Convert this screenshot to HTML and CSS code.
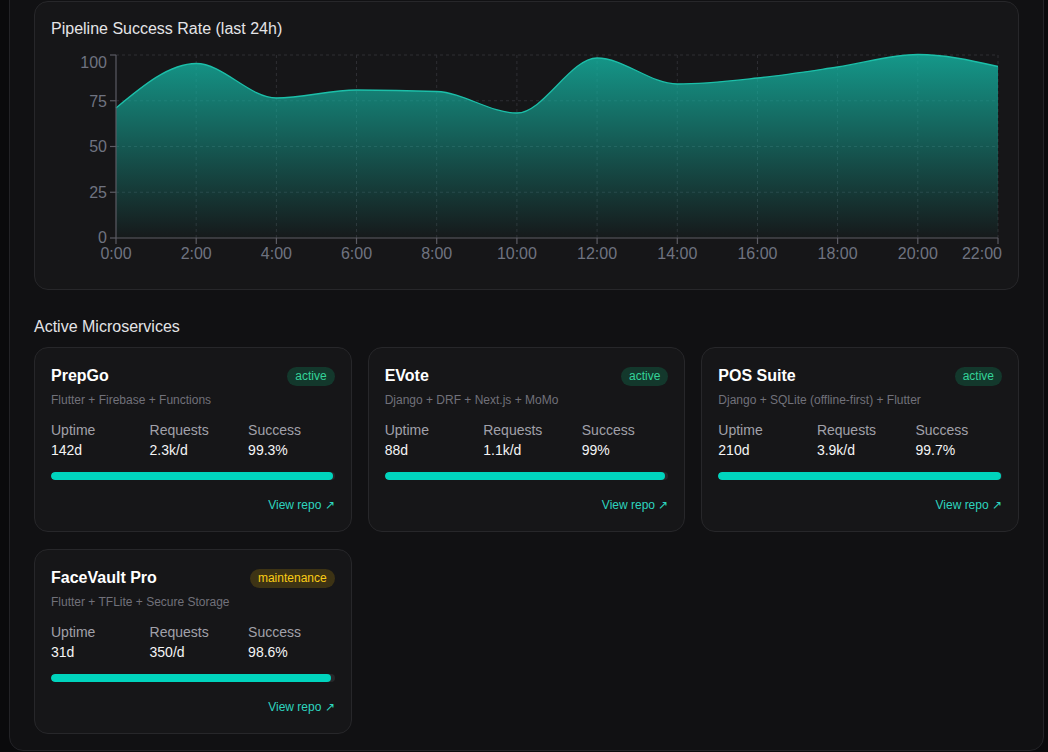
FILE: index.html
```html
<!DOCTYPE html>
<html lang="en">
<head>
<meta charset="utf-8">
<title>Pipeline Dashboard</title>
<link rel="stylesheet" href="styles.css">
</head>
<body>
<main class="panel">
  <section class="card chart-card">
    <h2 class="card-title">Pipeline Success Rate (last 24h)</h2>
    <svg class="chart" width="950" height="228" viewBox="0 0 950 228">
      <defs>
        <linearGradient id="areaFill" x1="0" y1="0" x2="0" y2="1">
          <stop offset="0%" stop-color="#14b8a6" stop-opacity="0.8"/>
          <stop offset="100%" stop-color="#14b8a6" stop-opacity="0.02"/>
        </linearGradient>
      </defs>
      <g transform="translate(-51,-44)">
        <g class="grid">
          <line x1="116" y1="55" x2="998" y2="55"/>
          <line x1="116" y1="100.75" x2="998" y2="100.75"/>
          <line x1="116" y1="146.5" x2="998" y2="146.5"/>
          <line x1="116" y1="192.25" x2="998" y2="192.25"/>
          <line x1="196.2" y1="55" x2="196.2" y2="238"/>
          <line x1="276.4" y1="55" x2="276.4" y2="238"/>
          <line x1="356.5" y1="55" x2="356.5" y2="238"/>
          <line x1="436.7" y1="55" x2="436.7" y2="238"/>
          <line x1="516.9" y1="55" x2="516.9" y2="238"/>
          <line x1="597.1" y1="55" x2="597.1" y2="238"/>
          <line x1="677.3" y1="55" x2="677.3" y2="238"/>
          <line x1="757.5" y1="55" x2="757.5" y2="238"/>
          <line x1="837.6" y1="55" x2="837.6" y2="238"/>
          <line x1="917.8" y1="55" x2="917.8" y2="238"/>
          <line x1="998" y1="55" x2="998" y2="238"/>
        </g>
        <path class="area" fill="url(#areaFill)" d="M116,108 C142.73,85.75 169.47,63.5 196.2,63.5 C222.93,63.5 249.67,98 276.4,98 C303.13,98 329.77,90 356.5,90 C383.23,90 409.97,90.5 436.7,91.5 C463.43,92.5 490.17,113 516.9,113 C543.63,113 570.37,58 597.1,58 C623.83,58 650.57,84 677.3,84 C704.03,84 730.77,80.83 757.5,78 C784.23,75.17 810.87,70.92 837.6,67 C864.33,63.08 891.07,54.5 917.8,54.5 C944.53,54.5 971.27,60.49 998,66.5 L998,238 L116,238 Z"/>
        <path class="line" d="M116,108 C142.73,85.75 169.47,63.5 196.2,63.5 C222.93,63.5 249.67,98 276.4,98 C303.13,98 329.77,90 356.5,90 C383.23,90 409.97,90.5 436.7,91.5 C463.43,92.5 490.17,113 516.9,113 C543.63,113 570.37,58 597.1,58 C623.83,58 650.57,84 677.3,84 C704.03,84 730.77,80.83 757.5,78 C784.23,75.17 810.87,70.92 837.6,67 C864.33,63.08 891.07,54.5 917.8,54.5 C944.53,54.5 971.27,60.49 998,66.5"/>
        <g class="axis">
          <line x1="116" y1="55" x2="116" y2="238"/>
          <line x1="116" y1="238" x2="998" y2="238"/>
          <line x1="110" y1="55" x2="116" y2="55"/>
          <line x1="110" y1="100.75" x2="116" y2="100.75"/>
          <line x1="110" y1="146.5" x2="116" y2="146.5"/>
          <line x1="110" y1="192.25" x2="116" y2="192.25"/>
          <line x1="110" y1="238" x2="116" y2="238"/>
          <line x1="116" y1="238" x2="116" y2="244"/>
          <line x1="196.2" y1="238" x2="196.2" y2="244"/>
          <line x1="276.4" y1="238" x2="276.4" y2="244"/>
          <line x1="356.5" y1="238" x2="356.5" y2="244"/>
          <line x1="436.7" y1="238" x2="436.7" y2="244"/>
          <line x1="516.9" y1="238" x2="516.9" y2="244"/>
          <line x1="597.1" y1="238" x2="597.1" y2="244"/>
          <line x1="677.3" y1="238" x2="677.3" y2="244"/>
          <line x1="757.5" y1="238" x2="757.5" y2="244"/>
          <line x1="837.6" y1="238" x2="837.6" y2="244"/>
          <line x1="917.8" y1="238" x2="917.8" y2="244"/>
          <line x1="998" y1="238" x2="998" y2="244"/>
        </g>
        <g class="ticks ticks-y">
          <text x="107" y="67.5">100</text>
          <text x="107" y="106.5">75</text>
          <text x="107" y="152.3">50</text>
          <text x="107" y="198">25</text>
          <text x="107" y="243.3">0</text>
        </g>
        <g class="ticks ticks-x">
          <text x="116" y="258.5">0:00</text>
          <text x="196.2" y="258.5">2:00</text>
          <text x="276.4" y="258.5">4:00</text>
          <text x="356.5" y="258.5">6:00</text>
          <text x="436.7" y="258.5">8:00</text>
          <text x="516.9" y="258.5">10:00</text>
          <text x="597.1" y="258.5">12:00</text>
          <text x="677.3" y="258.5">14:00</text>
          <text x="757.5" y="258.5">16:00</text>
          <text x="837.6" y="258.5">18:00</text>
          <text x="917.8" y="258.5">20:00</text>
          <text class="tick-last" x="1002" y="258.5">22:00</text>
        </g>
      </g>
    </svg>
  </section>

  <h2 class="section-title">Active Microservices</h2>

  <div class="services">
    <article class="card service">
      <header class="service-head">
        <h3 class="service-name">PrepGo</h3>
        <span class="badge badge-active">active</span>
      </header>
      <p class="service-stack">Flutter + Firebase + Functions</p>
      <div class="stats">
        <div class="stat"><span class="stat-label">Uptime</span><span class="stat-value">142d</span></div>
        <div class="stat"><span class="stat-label">Requests</span><span class="stat-value">2.3k/d</span></div>
        <div class="stat"><span class="stat-label">Success</span><span class="stat-value">99.3%</span></div>
      </div>
      <div class="bar"><div class="bar-fill" style="width: 99.3%"></div></div>
      <a class="repo-link" href="#">View repo ↗</a>
    </article>

    <article class="card service">
      <header class="service-head">
        <h3 class="service-name">EVote</h3>
        <span class="badge badge-active">active</span>
      </header>
      <p class="service-stack">Django + DRF + Next.js + MoMo</p>
      <div class="stats">
        <div class="stat"><span class="stat-label">Uptime</span><span class="stat-value">88d</span></div>
        <div class="stat"><span class="stat-label">Requests</span><span class="stat-value">1.1k/d</span></div>
        <div class="stat"><span class="stat-label">Success</span><span class="stat-value">99%</span></div>
      </div>
      <div class="bar"><div class="bar-fill" style="width: 99%"></div></div>
      <a class="repo-link" href="#">View repo ↗</a>
    </article>

    <article class="card service">
      <header class="service-head">
        <h3 class="service-name">POS Suite</h3>
        <span class="badge badge-active">active</span>
      </header>
      <p class="service-stack">Django + SQLite (offline-first) + Flutter</p>
      <div class="stats">
        <div class="stat"><span class="stat-label">Uptime</span><span class="stat-value">210d</span></div>
        <div class="stat"><span class="stat-label">Requests</span><span class="stat-value">3.9k/d</span></div>
        <div class="stat"><span class="stat-label">Success</span><span class="stat-value">99.7%</span></div>
      </div>
      <div class="bar"><div class="bar-fill" style="width: 99.7%"></div></div>
      <a class="repo-link" href="#">View repo ↗</a>
    </article>

    <article class="card service">
      <header class="service-head">
        <h3 class="service-name">FaceVault Pro</h3>
        <span class="badge badge-maint">maintenance</span>
      </header>
      <p class="service-stack">Flutter + TFLite + Secure Storage</p>
      <div class="stats">
        <div class="stat"><span class="stat-label">Uptime</span><span class="stat-value">31d</span></div>
        <div class="stat"><span class="stat-label">Requests</span><span class="stat-value">350/d</span></div>
        <div class="stat"><span class="stat-label">Success</span><span class="stat-value">98.6%</span></div>
      </div>
      <div class="bar"><div class="bar-fill" style="width: 98.6%"></div></div>
      <a class="repo-link" href="#">View repo ↗</a>
    </article>
  </div>
</main>
</body>
</html>
```

FILE: styles.css
```css
* {
  box-sizing: border-box;
}

html, body {
  margin: 0;
  padding: 0;
  background: #0a0a0c;
  height: 752px;
  overflow: hidden;
}

body {
  font-family: "Liberation Sans", Arial, sans-serif;
  color: #e4e4e7;
}

.panel {
  margin: -24px 4px 0 9px;
  padding: 24px 24px 16px;
  background: #111113;
  border: 1px solid #232327;
  border-radius: 14px;
}

.card {
  background: #161618;
  border: 1px solid #27272a;
  border-radius: 14px;
}

.chart-card {
  padding: 16px 16px 16px;
  height: 289px;
}

.card-title {
  margin: 0;
  font-size: 16px;
  font-weight: 400;
  line-height: 22px;
  color: #e4e4e7;
}

.chart {
  display: block;
  margin-top: 4px;
  overflow: visible;
}

.grid line {
  stroke: #2e2e33;
  stroke-width: 1;
  stroke-dasharray: 3 3;
}

.axis line {
  stroke: #5c5c64;
  stroke-width: 1.2;
}

.line {
  fill: none;
  stroke: #1cbfa9;
  stroke-width: 1.3;
}

.ticks text {
  font-family: "Liberation Sans", Arial, sans-serif;
  font-size: 16px;
  fill: #6f7380;
}

.ticks-y text {
  text-anchor: end;
}

.ticks-x text {
  text-anchor: middle;
}

.ticks-x .tick-last {
  text-anchor: end;
}

.section-title {
  margin: 25px 0 8px;
  font-size: 16px;
  font-weight: 400;
  line-height: 24px;
  color: #e4e4e7;
}

.services {
  display: grid;
  grid-template-columns: repeat(3, 1fr);
  gap: 17px 16px;
}

.service {
  display: flex;
  flex-direction: column;
  padding: 17px 16px 18px;
  height: 185px;
}

.service-head {
  display: flex;
  align-items: center;
  justify-content: space-between;
  height: 22px;
}

.service-name {
  margin: 0;
  font-size: 16px;
  font-weight: 700;
  line-height: 22px;
  color: #ffffff;
}

.badge {
  display: inline-block;
  padding: 2px 8px;
  border-radius: 999px;
  font-size: 12px;
  line-height: 15px;
}

.badge-active {
  background: #13382c;
  color: #34d399;
}

.badge-maint {
  background: #3d3314;
  color: #facc15;
}

.service-stack {
  margin: 5px 0 0;
  font-size: 12px;
  line-height: 16px;
  color: #71717a;
}

.stats {
  display: grid;
  grid-template-columns: repeat(3, 1fr);
  gap: 12px;
  margin-top: 12px;
}

.stat {
  display: flex;
  flex-direction: column;
}

.stat-label {
  font-size: 14px;
  line-height: 20px;
  color: #a1a1aa;
}

.stat-value {
  font-size: 14px;
  line-height: 20px;
  color: #f4f4f5;
}

.bar {
  margin-top: 12px;
  height: 8px;
  border-radius: 999px;
  background: #27272a;
  overflow: hidden;
}

.bar-fill {
  height: 100%;
  border-radius: 999px;
  background: #00d4bd;
}

.repo-link {
  margin-top: 17px;
  align-self: flex-end;
  font-size: 12px;
  line-height: 16px;
  color: #2dd4bf;
  text-decoration: none;
}
```
